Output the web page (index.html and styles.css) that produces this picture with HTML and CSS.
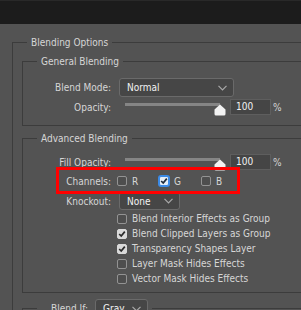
FILE: index.html
```html
<!DOCTYPE html>
<html>
<head>
<meta charset="utf-8">
<link rel="stylesheet" href="styles.css">
</head>
<body>
<div class="topbar"></div>
<fieldset class="group outer">
  <legend class="legend">Blending Options</legend>
  <div class="outer-body">
    <fieldset class="group inner">
      <legend class="legend">General Blending</legend>
      <div class="rows general-rows">
        <div class="row row-select">
          <span class="label">Blend Mode:</span>
          <div class="select select-mode">
            <span class="value">Normal</span>
            <svg class="chev" width="9" height="6" viewBox="0 0 9 6"><path d="M0.5 0.8 L4.5 4.8 L8.5 0.8" fill="none" stroke="#a8a8a8" stroke-width="1.2"/></svg>
          </div>
        </div>
        <div class="row row-slider">
          <span class="label">Opacity:</span>
          <div class="slider">
            <div class="track"></div>
            <svg class="thumb" width="12" height="12" viewBox="0 0 12 12"><path d="M6 0.5 L11.5 5.5 V10 Q11.5 11.5 10 11.5 H2 Q0.5 11.5 0.5 10 V5.5 Z" fill="#f2f2f2"/></svg>
          </div>
          <div class="num">100</div>
          <span class="pct">%</span>
        </div>
      </div>
    </fieldset>

    <fieldset class="group inner advanced">
      <legend class="legend">Advanced Blending</legend>
      <div class="rows advanced-rows">
        <div class="row row-slider">
          <span class="label">Fill Opacity:</span>
          <div class="slider">
            <div class="track"></div>
            <svg class="thumb" width="12" height="12" viewBox="0 0 12 12"><path d="M6 0.5 L11.5 5.5 V10 Q11.5 11.5 10 11.5 H2 Q0.5 11.5 0.5 10 V5.5 Z" fill="#f2f2f2"/></svg>
          </div>
          <div class="num">100</div>
          <span class="pct">%</span>
        </div>
        <div class="row row-channels">
          <span class="label">Channels:</span>
          <div class="channels">
            <span class="channel"><span class="box"></span><span class="ch-name">R</span></span>
            <span class="channel"><span class="box box-focus"><svg width="8" height="8" viewBox="0 0 8 8"><path d="M1.2 4 L3.2 6 L6.8 1.6" fill="none" stroke="#1e2a3a" stroke-width="1.7"/></svg></span><span class="ch-name">G</span></span>
            <span class="channel"><span class="box"></span><span class="ch-name">B</span></span>
          </div>
        </div>
        <div class="row row-knockout">
          <span class="label">Knockout:</span>
          <div class="select select-knock">
            <span class="value">None</span>
            <svg class="chev" width="9" height="6" viewBox="0 0 9 6"><path d="M0.5 0.8 L4.5 4.8 L8.5 0.8" fill="none" stroke="#a8a8a8" stroke-width="1.2"/></svg>
          </div>
        </div>
        <div class="checklist">
          <div class="check-row"><span class="box"></span><span class="check-label">Blend Interior Effects as Group</span></div>
          <div class="check-row"><span class="box box-on"><svg width="8" height="8" viewBox="0 0 8 8"><path d="M1.2 4 L3.2 6 L6.8 1.6" fill="none" stroke="#2a2a2a" stroke-width="1.7"/></svg></span><span class="check-label">Blend Clipped Layers as Group</span></div>
          <div class="check-row"><span class="box box-on"><svg width="8" height="8" viewBox="0 0 8 8"><path d="M1.2 4 L3.2 6 L6.8 1.6" fill="none" stroke="#2a2a2a" stroke-width="1.7"/></svg></span><span class="check-label">Transparency Shapes Layer</span></div>
          <div class="check-row"><span class="box"></span><span class="check-label">Layer Mask Hides Effects</span></div>
          <div class="check-row"><span class="box"></span><span class="check-label">Vector Mask Hides Effects</span></div>
        </div>
      </div>
    </fieldset>

    <fieldset class="group inner blendif">
      <legend class="legend legend-blendif">
        <span class="bi-wrap">
          <span class="bi-label">Blend If:</span>
          <span class="select select-gray">
            <span class="value">Gray</span>
            <svg class="chev" width="9" height="6" viewBox="0 0 9 6"><path d="M0.5 0.8 L4.5 4.8 L8.5 0.8" fill="none" stroke="#a8a8a8" stroke-width="1.2"/></svg>
          </span>
        </span>
      </legend>
      <div class="blendif-body"></div>
    </fieldset>
  </div>
</fieldset>
<div class="callout"></div>
</body>
</html>
```

FILE: styles.css
```css
* { box-sizing: border-box; }

html, body { margin: 0; padding: 0; }

body {
  position: relative;
  width: 301px;
  height: 310px;
  overflow: hidden;
  background: #535353;
  font-family: "DejaVu Sans Condensed", "DejaVu Sans", sans-serif;
  font-stretch: condensed;
  font-size: 10px;
  color: #d6d6d6;
}

.topbar {
  height: 24px;
  background: #1c1c1c;
  border-top: 1px solid #292929;
}

.group {
  margin: 0;
  padding: 0;
  border: 1px solid #3c3c3c;
  min-width: 0;
}

.outer {
  margin: 12px 0 0 12px;
  width: 330px;
}

.legend {
  margin-left: 14px;
  padding: 0 4px;
  height: 13px;
  line-height: 13px;
  white-space: nowrap;
}

.outer-body {
  margin-left: 9px;
  padding-top: 6px;
}

.inner { width: 310px; }

.advanced { margin-top: 6px; }

.rows { display: flex; flex-direction: column; }

.general-rows { padding: 10px 0 8px 0; }

.advanced-rows { padding: 7px 0 6px 0; }

.row { display: flex; align-items: center; }

.label {
  width: 88px;
  margin-right: 8px;
  text-align: right;
  white-space: nowrap;
}

.row-select { height: 19px; }

.row-slider { height: 20px; align-items: stretch; }
.row-slider .label { align-self: center; }

.select {
  display: flex;
  align-items: center;
  justify-content: space-between;
  height: 100%;
  padding: 0 6px 0 7px;
  background: #464646;
  border: 1px solid #6a6a6a;
  border-radius: 3px;
  color: #f2f2f2;
}

.select-mode { width: 115px; }

.chev { display: block; }

.slider {
  position: relative;
  width: 101px;
  margin-left: 6px;
}

.track {
  width: 95px;
  height: 3px;
  margin-top: 6px;
  background: #858585;
}

.thumb {
  position: absolute;
  left: 89px;
  top: 7px;
}

.num {
  align-self: center;
  width: 41px;
  height: 16px;
  margin-left: 4px;
  padding-left: 5px;
  line-height: 14px;
  background: #454545;
  border: 1px solid #5e5e5e;
  color: #f2f2f2;
}

.pct {
  align-self: center;
  margin-left: 2px;
}

.row-channels { height: 18px; }

.channels {
  display: flex;
  margin-left: -2px;
}

.channel {
  display: flex;
  align-items: center;
  width: 42px;
}

.ch-name { margin-left: 5px; }

.box {
  display: flex;
  align-items: center;
  justify-content: center;
  width: 10px;
  height: 10px;
  border: 1px solid #939393;
  border-radius: 2px;
  background: #4e4e4e;
  flex: none;
}

.box-on {
  background: #d9d9d9;
  border-color: #d9d9d9;
}

.box-focus {
  background: #e6eef8;
  border-color: #3b8ae6;
  box-shadow: 0 0 0 1px #3b8ae6;
}

.row-knockout {
  height: 18px;
  margin-top: 2px;
}

.select-knock { width: 61px; }

.checklist {
  margin-top: 1px;
  margin-left: 94px;
}

.check-row {
  display: flex;
  align-items: center;
  height: 15px;
}

.check-label {
  margin-left: 5px;
  white-space: nowrap;
}

.blendif { margin-top: 6px; }

.legend-blendif {
  height: 19px;
  line-height: normal;
}

.bi-wrap {
  display: flex;
  align-items: center;
  height: 19px;
}

.bi-label {
  width: 47px;
  text-align: right;
}

.select-gray {
  width: 53px;
  margin-left: 7px;
}

.blendif-body { height: 40px; }

.callout {
  position: absolute;
  left: 56px;
  top: 167px;
  width: 184px;
  height: 27px;
  border: 3px solid #ff0000;
}
```
